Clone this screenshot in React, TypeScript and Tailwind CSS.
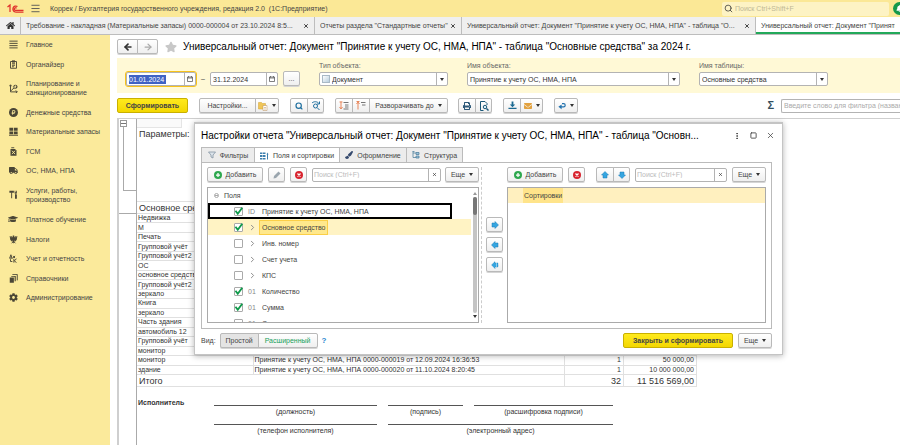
import type { ReactNode } from 'react';
import clsx from 'clsx';
import { FaCog, FaGraduationCap, FaHome, FaRubleSign, FaStar, FaTruck, FaPrint, FaPaintBrush, FaEnvelope, FaBell } from 'react-icons/fa';
import { Menu, Search, X, Square, MoreVertical, ChevronRight, ArrowLeft, ArrowRight } from 'lucide-react';

const BTN = 'flex h-[15px] items-center justify-center rounded-[2px] border border-[#b9b9b9] bg-linear-to-b from-white to-[#efefef] shadow-[0_1px_0_#d5d5d5]';
const YELLOW = 'h-[15px] rounded-[2px] border border-[#c9b000] bg-linear-to-b from-[#ffea1c] to-[#f3d700] font-bold text-[#444]';
const FIELD = 'flex h-[14px] items-stretch rounded-[2px] border border-[#b3b3b3] bg-white text-[#333]';

const Caret = () => <svg viewBox="0 0 8 6" className="h-[3px] w-[4px]" fill="#333"><path d="M0 0h8L4 6z" /></svg>;

function Money() {
  return (
    <span className="flex size-[9px] items-center justify-center rounded-full bg-[#4a4636] text-[#fbea9b]"><FaRubleSign size={5} /></span>
  );
}

// 24x24 glyphs of the side menu
function Glyph({ d, solid, hollow }: { d: string; solid?: string; hollow?: string }) {
  return (
    <svg viewBox="0 0 24 24" className="size-[9px]" fill="none" stroke="currentColor" strokeWidth="2.5">
      {solid && <path d={solid} fill="currentColor" stroke="none" />}
      {hollow && <path d={hollow} stroke="#fbea9b" />}
      <path d={d} />
    </svg>
  );
}

const NAV: { icon: ReactNode; label: string }[] = [
  { icon: <Glyph d="M1 3h22M1 9h22M1 15h22M1 21h22" />, label: 'Главное' },
  { icon: <Glyph d="M4 4h16v18H4zM8 10h8M8 14h8M8 18h5" solid="M8 1h8v6H8z" />, label: 'Органайзер' },
  { icon: <Glyph d="M4 3v18h18M1 6l3-4 3 4M18 17l4 4-4 3M6 18l5-6h3" solid="M17 2a5.500 5.500 0 1 0 .1 0z" hollow="M16 11V5h2v3h-3" />, label: 'Планирование и санкционирование' },
  { icon: <Money />, label: 'Денежные средства' },
  { icon: <Glyph d="M0 22h24" solid="M1 2h10v8H1zM13 2h10v8H13zM1 12h10v7H1zM13 12h10v7H13z" />, label: 'Материальные запасы' },
  { icon: <Glyph d="M6 2h8" solid="M4 5h12l4 4v14H4z" hollow="M8 10l8 9M16 10l-8 9" />, label: 'ГСМ' },
  { icon: <FaTruck size={9} />, label: 'ОС, НМА, НПА' },
  { icon: <Glyph d="M7 6v16M18 9v4" solid="M1 2h12v5H1zM15 2h2v4h2V2h2v7h-6zM16 12h5v11h-5z" />, label: 'Услуги, работы, производство' },
  { icon: <FaGraduationCap size={10} />, label: 'Платное обучение' },
  { icon: <Glyph d="M3 3l2 11 4 3M21 3l-2 11-4 3M7 3l2 8M17 3l-2 8M7 22l5-5 5 5" solid="M10 1h4v16l-2 6-2-6zM3 6h18l-3 9H6z" />, label: 'Налоги' },
  { icon: <Glyph d="M2 11l3-9 3 9M1 11h9M11 5l5 6M16 5l-5 6M13 13v10M20 13l-6 5 6 5M4 14v6h5" />, label: 'Учет и отчетность' },
  { icon: <Glyph d="M9 1h13v16" solid="M2 9h11v14H2zM6 5h12v14h-3V7H6z" />, label: 'Справочники' },
  { icon: <FaCog size={9} />, label: 'Администрирование' },
];

const ROWS = [
  'Недвижка', 'М', 'Печать', 'Групповой учёт', 'Групповой учёт2', 'ОС', 'основное средство', 'Групповой учёт2',
  'зеркало', 'Книга', 'зеркало', 'Часть здания', 'автомобиль 12', 'Групповой учёт', 'монитор', 'монитор', 'здание',
].map((name, i) => {
  if (i === 15) return { name, doc: 'Принятие к учету ОС, НМА, НПА 0000-000019 от 12.09.2024 16:36:53', qty: '1', sum: '50 000,00' };
  if (i === 16) return { name, doc: 'Принятие к учету ОС, НМА, НПА 0000-000020 от 11.10.2024 8:20:45', qty: '1', sum: '10 000 000,00' };
  return { name, doc: '', qty: '', sum: '' };
});

function Header() {
  return (
    <header className="flex h-[17px] items-center bg-[#fbe896] pl-[7px]">
      <svg viewBox="0 0 34 18" className="h-[9px] w-[17px]" fill="none" stroke="#e0312b" strokeWidth="2.500">
        <path d="M1 6l5-4v14" />
        <path d="M21 5a6 6 0 1 0-4 11h16M19 8.500a2.500 2.500 0 1 0-2 4h16" />
      </svg>
      <button aria-label="Меню" className="ml-[6px]"><Menu size={11} className="text-[#555]" /></button>
      <span className="ml-[9px] whitespace-pre">Коррек / Бухгалтерия государственного учреждения, редакция 2.0  (1С:Предприятие)</span>
      <label className="ml-auto flex h-[14px] w-[167px] items-center gap-[2px] rounded-[2px] bg-[#fdf3c4] pl-[2px]">
        <Search size={9} className="text-[#333]" />
        <input aria-label="Поиск" placeholder="Поиск Ctrl+Shift+F" className="min-w-0 flex-1 outline-none placeholder:text-[#c0b896]" />
      </label>
      <div className="ml-[4px] w-[7px] overflow-hidden">
        <span className="flex size-[13px] items-center justify-center rounded-full bg-[#16994a] text-white"><FaBell size={7} /></span>
      </div>
    </header>
  );
}

function WindowTab({ label, className, active }: { label: string; className: string; active?: boolean }) {
  return (
    <div className={clsx('flex items-center border-l border-[#bdbdbd] px-[5px]', active && 'bg-white shadow-[inset_0_-2px_0_#22a95a]', className)}>
      <span className="flex-1 overflow-hidden whitespace-nowrap">{label}</span>
      {!active && <button aria-label="Закрыть"><X size={6} strokeWidth={4} /></button>}
    </div>
  );
}

function Combo({ label, value, className, icon }: { label: string; value: string; className: string; icon?: boolean }) {
  return (
    <label className={clsx('flex flex-col gap-[1px] text-[#666]', className)}>
      <span className="h-[11px] leading-[11px]">{label}</span>
      <span className={FIELD}>
        {icon && <span className="my-auto ml-[2px] size-[8px] border border-[#a9b9c6] bg-linear-to-br from-white to-[#b8cede]" />}
        <select className="min-w-0 flex-1 appearance-none px-[2px] outline-none"><option>{value}</option></select>
        <span className="flex w-[11px] items-center justify-center border-l border-[#b3b3b3]"><Caret /></span>
      </span>
    </label>
  );
}

function DateField({ value, active }: { value: string; active?: boolean }) {
  return (
    <span className={clsx(FIELD, active ? 'w-[70px] outline-1 outline-[#f7c21b]' : 'w-[68px]')}>
      <span className="flex flex-1 items-center pl-[2px]">
        <input aria-label="Дата" defaultValue={value} className={clsx('w-[37px] outline-none', active && 'bg-[#3f62c4] text-white')} />
      </span>
      <button aria-label="Календарь" className="flex w-[11px] items-center justify-center border-l border-[#b3b3b3]">
        <svg viewBox="0 0 12 12" className="size-[6px]" fill="none" stroke="#555" strokeWidth="1.500"><path d="M1 2h10v9H1zM1 4h10M3 0v3M9 0v3" /></svg>
      </button>
    </span>
  );
}

function PageSearch() {
  return (
    <svg viewBox="0 0 20 20" className="size-[10px]" fill="none" stroke="#1c5878" strokeWidth="2">
      <path d="M16 8V5l-4-4H3v18h6" /><circle cx="12" cy="12" r="3.500" fill="#d8ecf5" /><path d="M15 15l4 4" strokeWidth="3" />
    </svg>
  );
}

function Toolbar() {
  return (
    <div className="flex items-center pl-[7px] pt-[5px]">
      <button className={clsx(YELLOW, 'w-[71px]')}>Сформировать</button>
      <button className={clsx(BTN, 'ml-[11px] w-[57px] rounded-r-none')}>Настройки...</button>
      <button aria-label="Варианты" className={clsx(BTN, '-ml-px w-[24px] gap-[4px] rounded-l-none')}>
        <svg viewBox="0 0 20 20" className="size-[10px]"><path d="M1 3h6l2 2h6v11H1z" fill="#f0c659" stroke="#d3a02f" /><path d="M10 9h8v10h-8z" fill="#fff" stroke="#b98d55" /><path d="M12 13h4M12 16h4" stroke="#b98d55" /></svg>
        <Caret />
      </button>
      <button aria-label="Найти" className={clsx(BTN, 'ml-[11px] w-[18px] rounded-r-none text-[#1f6f9f]')}><Search size={8} strokeWidth={3.500} /></button>
      <button aria-label="Найти далее" className={clsx(BTN, '-ml-px w-[17px] rounded-l-none')}>
        <svg viewBox="0 0 20 20" className="size-[10px]" fill="none" stroke="#1f6f9f" strokeWidth="2"><circle cx="9" cy="10" r="4" /><path d="M12 13l5 5M2 4c4-4 11-3 14 1M17 1v5h-5" /></svg>
      </button>
      <button aria-label="Свернуть" className={clsx(BTN, 'ml-[11px] w-[18px] rounded-r-none')}><Levels down /></button>
      <button aria-label="Развернуть" className={clsx(BTN, '-ml-px w-[18px] rounded-none')}><Levels /></button>
      <button className={clsx(BTN, '-ml-px w-[79px] gap-[4px] rounded-l-none')}>Разворачивать до <Caret /></button>
      <button aria-label="Печать" className={clsx(BTN, 'ml-[10px] w-[18px] rounded-r-none text-[#2c5878]')}><FaPrint size={8} /></button>
      <button aria-label="Просмотр" className={clsx(BTN, '-ml-px w-[17px] rounded-l-none')}><PageSearch /></button>
      <button aria-label="Сохранить" className={clsx(BTN, 'ml-[11px] w-[18px] rounded-r-none')}>
        <svg viewBox="0 0 20 20" className="size-[9px]" fill="#1c6a92"><path d="M8 1h4v7h4l-6 6-6-6h4zM1 15h18v3H1z" /></svg>
      </button>
      <button aria-label="Отправить" className={clsx(BTN, '-ml-px w-[23px] gap-[4px] rounded-l-none')}><FaEnvelope size={8} className="text-[#e2a240]" /><Caret /></button>
      <button aria-label="Назад" className={clsx(BTN, 'ml-[11px] w-[24px] gap-[4px]')}>
        <svg viewBox="0 0 20 20" className="size-[8px]" fill="none" stroke="#2272ae" strokeWidth="3"><path d="M10 4h4a4 4 0 0 1 0 8H5" /><path d="M9 6v12l-8-6z" fill="#2272ae" stroke="none" /></svg>
        <Caret />
      </button>
      <span className="ml-auto mr-[7px] text-[11px] font-bold leading-none text-[#34505f]">Σ</span>
      <div className={clsx(FIELD, 'w-[119px] overflow-hidden rounded-r-none border-r-0')}>
        <input aria-label="Фильтр" placeholder="Введите слово для фильтра (название)" className="min-w-0 flex-1 pl-[2px] outline-none placeholder:text-[#aaa]" />
      </div>
    </div>
  );
}

function Levels({ down }: { down?: boolean }) {
  return (
    <svg viewBox="0 0 20 18" className="h-[9px] w-[10px]" fill="none" strokeWidth="2">
      <path d={down ? 'M4 1v14M1 12l3 4 3-4M1 2h6' : 'M4 17V3M1 6l3-4 3 4M1 1h6'} stroke="#e8875c" />
      <path d={down ? 'M9 3h10M12 8h7M12 12h7M9 16h10' : 'M10 3h9M12 8h7'} stroke="#777" />
    </svg>
  );
}

const SLOT = 'border-t border-[#555] pt-[1px] text-center leading-[9px]';

function Report() {
  return (
    <div className="mt-[5px] ml-[7px] flex flex-1 border-l-2 border-t border-[#cfcfcf] text-[#333]">
      <div className="w-[17px] shrink-0">
        <div className="flex h-[95px] flex-col items-end border-b border-[#aaa]">
          <div className="mr-[9px] mt-px flex size-[7px] items-center justify-center border border-[#999]"><span className="h-px w-[5px] bg-[#777]" /></div>
          <div className="h-[64px] w-[13px] border-b border-l border-[#aaa]" />
        </div>
      </div>
      <div className="flex-1 border-l border-[#aaa]">
        <div className="h-[9px] w-[45px] border-b border-r border-[#e5e5e5] bg-[#fafafa]" />
        <div className="flex h-[73px] items-start pl-[2px] pt-[1px] text-[9px] leading-[11px]">Параметры:</div>
        <table className="h-[186px] w-[560px] table-fixed border-collapse whitespace-nowrap text-left leading-[8px]">
          <colgroup><col className="w-[116px]" /><col /><col className="w-[59px]" /><col className="w-[73px]" /></colgroup>
          <thead>
            <tr className="h-[12px] border-y border-[#e0e0e0] text-[9px]">
              <th className="overflow-hidden pl-[2px] font-normal">Основное средство</th><th /><th /><th />
            </tr>
          </thead>
          <tbody>
            {ROWS.map((r, i) => (
              <tr key={i} className="border-b border-[#e0e0e0]">
                <td className="overflow-hidden border-r border-[#e0e0e0] pl-[1px]">{r.name}</td>
                <td className="border-r border-[#e0e0e0] pl-[1px]">{r.doc}</td>
                <td className="border-r border-[#e0e0e0] pr-[2px] text-right">{r.qty}</td>
                <td className="border-r border-[#e0e0e0] pr-[2px] text-right">{r.sum}</td>
              </tr>
            ))}
          </tbody>
          <tfoot>
            <tr className="h-[12px] border-b border-[#e0e0e0] text-[9px]">
              <td className="pl-[2px]">Итого</td><td />
              <td className="border-x border-[#e0e0e0] pr-[2px] text-right">32</td>
              <td className="border-r border-[#e0e0e0] pr-[2px] text-right">11 516 569,00</td>
            </tr>
          </tfoot>
        </table>
        <div className="grid w-[477px] grid-cols-[66px_163px_75px_139px] gap-x-[11px] pt-[11px]">
          <b className="pl-[1px]">Исполнитель</b>
          <div className={clsx(SLOT, 'mt-[7px]')}>(должность)</div>
          <div className={clsx(SLOT, 'mt-[7px]')}>(подпись)</div>
          <div className={clsx(SLOT, 'mt-[7px]')}>(расшифровка подписи)</div>
          <div className={clsx(SLOT, 'col-start-2 mt-[8px]')}>(телефон исполнителя)</div>
          <div className={clsx(SLOT, 'col-span-2 mt-[8px]')}>(электронный адрес)</div>
        </div>
      </div>
    </div>
  );
}

function Arrow({ turn, dashed }: { turn?: string; dashed?: boolean }) {
  return (
    <svg viewBox="0 0 16 16" className={clsx('size-[8px]', turn)} fill="#35a5e0" stroke="#1b7ab5">
      <path d="M8 1l7 7-7 7v-3H2V4h6z" strokeDasharray={dashed ? '2 1' : undefined} />
      {dashed && <path d="M5 3v10" stroke="#d6ecf8" />}
    </svg>
  );
}

function AddButton() {
  return (
    <button className={clsx(BTN, 'w-[56px] gap-[4px]')}>
      <svg viewBox="0 0 16 16" className="size-[8px]"><circle cx="8" cy="8" r="8" fill="#2fa84f" /><path d="M8 4v8M4 8h8" stroke="#fff" strokeWidth="2.500" /></svg>
      Добавить
    </button>
  );
}

function DeleteButton() {
  return (
    <button aria-label="Удалить" className={clsx(BTN, 'w-[17px]')}>
      <svg viewBox="0 0 16 16" className="size-[8px]"><circle cx="8" cy="8" r="8" fill="#d8232e" /><path d="M5 5l6 6M11 5l-6 6" stroke="#fff" strokeWidth="2.500" /></svg>
    </button>
  );
}

function SearchField({ className }: { className: string }) {
  return (
    <div className={clsx(FIELD, className)}>
      <input aria-label="Поиск" placeholder="Поиск (Ctrl+F)" className="min-w-0 flex-1 pl-[1px] outline-none placeholder:text-[#bbb]" />
      <button aria-label="Очистить" className="flex w-[12px] items-center justify-center border-l border-[#b3b3b3]"><X size={5} strokeWidth={3} /></button>
    </div>
  );
}

const More = () => <button className={clsx(BTN, 'w-[34px] gap-[4px]')}>Еще <Caret /></button>;

const FIELDS = [
  { label: 'Принятие к учету ОС, НМА, НПА', kind: 'ID', on: true },
  { label: 'Основное средство', kind: '>', on: true },
  { label: 'Инв. номер', kind: '>', on: false },
  { label: 'Счет учета', kind: '>', on: false },
  { label: 'КПС', kind: '>', on: false },
  { label: 'Количество', kind: '01', on: true },
  { label: 'Сумма', kind: '01', on: true },
  { label: 'Сумма амортизации', kind: '01', on: false },
];

function FieldRow({ label, kind, on, index }: { label: string; kind: string; on: boolean; index: number }) {
  return (
    <label className={clsx('flex h-[16px] shrink-0 items-center border-2 pl-[24px]', index === 0 ? 'mr-[19px] border-black' : 'border-transparent', index === 1 && 'bg-[#fff3c4]')}>
      <span className="relative flex size-[9px]">
        <input type="checkbox" defaultChecked={on} className="peer size-[9px] appearance-none rounded-[1px] border border-[#aaa] bg-white" />
        <svg viewBox="0 0 12 12" className="absolute inset-0 hidden size-[9px] peer-checked:block" fill="none" stroke="#109a4b" strokeWidth="2.500"><path d="M2 5l3 4 6-8" /></svg>
      </span>
      <span className="ml-[5px] w-[9px] text-[#888]">{kind === '>' ? <ChevronRight size={9} strokeWidth={2.500} /> : kind}</span>
      <span className={clsx('ml-[2px] flex h-[15px] items-center border px-[2px]', index === 1 ? 'border-[#fbcf47] bg-[#ffe88c]' : 'border-transparent')}>{label}</span>
    </label>
  );
}

const TAB = 'flex h-[15px] items-center justify-center gap-[4px] border-r border-t border-[#bbb] first:border-l';

function SettingsDialog() {
  return (
    <section role="dialog" aria-label="Настройки отчета" className="absolute left-[194px] top-[122px] flex w-[589px] flex-col border border-t-2 border-[#c4c4c4] bg-white pb-[6px] pl-[6px] pr-[10px] shadow-[0_1px_6px_rgba(0,0,0,0.3)]">
      <div className="flex h-[23px] items-center text-black">
        <h2 className="whitespace-nowrap text-[10px] leading-[14px]">Настройки отчета "Универсальный отчет: Документ "Принятие к учету ОС, НМА, НПА" - таблица "Основн...</h2>
        <div className="ml-auto -mr-[3px] flex items-center gap-[9px] text-[#444]">
          <button aria-label="Меню"><MoreVertical size={8} strokeWidth={3} /></button>
          <button aria-label="Развернуть"><Square size={7} strokeWidth={3} /></button>
          <button aria-label="Закрыть"><X size={9} /></button>
        </div>
      </div>
      <div role="tablist" className="flex">
        <button role="tab" className={clsx(TAB, 'w-[54px] bg-[#ececec]')}>
          <svg viewBox="0 0 16 16" className="size-[8px]" fill="#dde5ec" stroke="#7d8f9f" strokeWidth="1.500"><path d="M1 2h14l-5 6v6l-4-2V8z" /></svg>
          Фильтры
        </button>
        <button role="tab" aria-selected className={clsx(TAB, '-mb-px h-[16px] w-[85px] bg-white')}>
          <svg viewBox="0 0 18 16" className="h-[8px] w-[9px]" fill="#3c7fae"><path d="M0 1h5v3H0zM6 1h5v3H6zM0 6h5v4H0zM6 6h5v4H6zM0 12h5v3H0zM6 12h5v3H6zM13 5l2-4 2 4zM14 5h2v10h-2z" /></svg>
          Поля и сортировки
        </button>
        <button role="tab" className={clsx(TAB, 'w-[67px] bg-[#ececec]')}><FaPaintBrush size={8} className="text-[#354a6e]" />Оформление</button>
        <button role="tab" className={clsx(TAB, 'w-[56px] bg-[#ececec]')}>
          <svg viewBox="0 0 16 16" className="size-[8px]" fill="none" stroke="#4c7d9c" strokeWidth="1.500"><path d="M2 1v12h6M2 4h6M1 1h4" /><path d="M8 3h6v4H8zM8 10h6v4H8z" fill="#9cc3dc" /></svg>
          Структура
        </button>
      </div>
      <div className="flex border border-[#bbb] p-[5px] pt-[4px]">
        <div className="flex w-[272px] flex-col gap-[5px]">
          <div className="flex items-center">
            <AddButton />
            <button aria-label="Изменить" className={clsx(BTN, 'ml-[5px] mr-[5px] w-[17px]')}>
              <svg viewBox="0 0 16 16" className="size-[8px]" fill="#9aa5ae"><path d="M11 1l4 4-9 9-5 1 1-5z" /></svg>
            </button>
            <DeleteButton />
            <SearchField className="ml-[5px] mr-auto w-[129px]" />
            <More />
          </div>
          <div className="flex h-[136px] border border-[#aaa]">
            <div className="flex flex-1 flex-col overflow-hidden">
              <div className="flex h-[15px] shrink-0 items-center gap-[5px] pl-[6px]"><span className="flex size-[5px] items-center justify-center rounded-full border border-[#aaa]"><span className="h-px w-[3px] bg-[#aaa]" /></span>Поля</div>
              {FIELDS.map((f, i) => <FieldRow key={f.label} index={i} {...f} />)}
            </div>
            <div className="flex w-[7px] flex-col items-center justify-between py-[4px]">
              <span className="rotate-180 opacity-50"><Caret /></span>
              <div className="my-[2px] w-[4px] flex-1 rounded bg-[#c4c4c4]"><div className="h-[18px] rounded bg-[#777]" /></div>
              <Caret />
            </div>
          </div>
        </div>
        <div className="ml-[2px] flex w-[26px] flex-col items-center gap-[5px] border-l border-dashed border-[#ccc] pt-[50px]">
          <button aria-label="Добавить поле" className={clsx(BTN, 'w-[17px]')}><Arrow /></button>
          <button aria-label="Убрать поле" className={clsx(BTN, 'w-[17px]')}><Arrow turn="rotate-180" /></button>
          <button aria-label="Убрать все" className={clsx(BTN, 'w-[17px]')}><Arrow turn="rotate-180" dashed /></button>
        </div>
        <div className="flex flex-1 flex-col gap-[5px]">
          <div className="flex items-center">
            <AddButton />
            <span className="w-[5px]" />
            <DeleteButton />
            <button aria-label="Вверх" className={clsx(BTN, 'ml-[11px] w-[18px] rounded-r-none')}><Arrow turn="-rotate-90" /></button>
            <button aria-label="Вниз" className={clsx(BTN, '-ml-px w-[17px] rounded-l-none')}><Arrow turn="rotate-90" /></button>
            <SearchField className="ml-[5px] mr-auto w-[92px]" />
            <More />
          </div>
          <div className="h-[136px] border border-[#aaa]">
            <div className="flex h-[15px] items-center bg-[#fff0bf] pl-[15px]"><span className="flex h-full items-center bg-[#ffe48a] px-[1px]">Сортировки</span></div>
          </div>
        </div>
      </div>
      <div className="flex items-center pt-[4px]">
        <span>Вид:</span>
        <button className={clsx(BTN, 'ml-[4px] w-[39px] rounded-r-none bg-[#e4e4e4] bg-none')}>Простой</button>
        <button className={clsx(BTN, '-ml-px w-[60px] rounded-l-none text-[#16a05a]')}>Расширенный</button>
        <a href="#help" className="ml-[4px] text-[8px] font-bold text-[#2a86d0]">?</a>
        <button className={clsx(YELLOW, 'ml-auto mr-[5px] w-[110px]')}>Закрыть и сформировать</button>
        <More />
      </div>
    </section>
  );
}

export default function App() {
  return (
    <div className="relative flex min-h-screen flex-col overflow-hidden bg-white font-['Liberation_Sans',Arial,sans-serif] text-[7px] leading-[9px] text-[#444]">
      <Header />
      <div className="flex h-[18px] border-b border-[#bdbdbd] bg-[#efefef]">
        <button aria-label="Начальная страница" className="flex w-[20px] items-center justify-center text-[#333]"><FaHome size={9} /></button>
        <WindowTab className="w-[294px]" label="Требование - накладная (Материальные запасы) 0000-000004 от 23.10.2024 8:5..." />
        <WindowTab className="w-[147px]" label={'Отчеты раздела "Стандартные отчеты"'} />
        <WindowTab className="w-[294px]" label={'Универсальный отчет: Документ "Принятие к учету ОС, НМА, НПА" - таблица "О...'} />
        <WindowTab className="min-w-0 flex-1" active label={'Универсальный отчет: Документ "Принятие к учету ОС, НМА, НПА"'} />
      </div>
      <div className="flex flex-1">
        <nav className="w-[110px] shrink-0 bg-[#fbea9b] pt-[5px]">
          <ul className="flex h-[262px] flex-col justify-between">
            {NAV.map((n) => (
              <li key={n.label}>
                <a href="#section" className="flex items-center pr-[6px]"><span className="flex w-[26px] shrink-0 justify-center text-[#4a4636]">{n.icon}</span>{n.label}</a>
              </li>
            ))}
          </ul>
        </nav>
        <main className="flex min-w-0 flex-1 flex-col">
          <div className="flex h-[23px] items-center pl-[7px]">
            <button aria-label="Назад" className={clsx(BTN, 'w-[21px] rounded-r-none')}><ArrowLeft size={10} strokeWidth={4} className="text-[#333]" /></button>
            <button aria-label="Вперед" className={clsx(BTN, '-ml-px w-[21px] rounded-l-none')}><ArrowRight size={10} strokeWidth={3} className="text-[#aaa]" /></button>
            <FaStar size={12} className="ml-[7px] mr-[6px] text-[#c8c8c8]" />
            <h1 className="whitespace-nowrap text-[10px] leading-[14px] text-black">Универсальный отчет: Документ "Принятие к учету ОС, НМА, НПА" - таблица "Основные средства" за 2024 г.</h1>
          </div>
          <div className="ml-[7px] flex h-[35px] items-end bg-[#fff9d6] pb-[7px] pl-[9px]">
            <DateField value="01.01.2024" active />
            <span className="w-[14px] text-center leading-[14px]">–</span>
            <DateField value="31.12.2024" />
            <button className={clsx(BTN, 'ml-[5px] w-[17px]')}>...</button>
            <Combo className="ml-[19px] w-[129px]" label="Тип объекта:" value="Документ" icon />
            <Combo className="ml-[19px] w-[213px]" label="Имя объекта:" value="Принятие к учету ОС, НМА, НПА" />
            <Combo className="ml-[19px] w-[129px]" label="Имя таблицы:" value="Основные средства" />
          </div>
          <Toolbar />
          <Report />
        </main>
      </div>
      <SettingsDialog />
    </div>
  );
}
